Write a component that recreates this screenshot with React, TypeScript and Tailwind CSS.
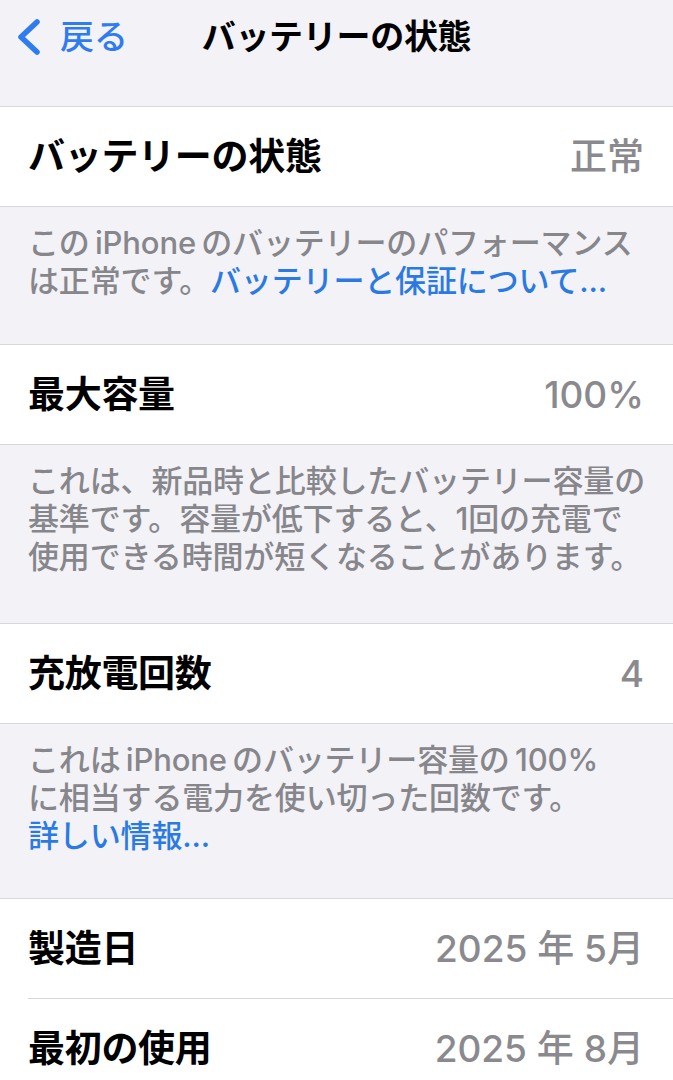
import type { ReactNode } from "react"

const font = "font-['Inter','Noto_Sans_CJK_JP',sans-serif]"

function Chevron() {
  return (
    <svg width="28" height="36" viewBox="0 0 28 36" fill="none" className="shrink-0">
      <path d="M23 3 L7 18 L23 33" stroke="#2f7bf0" strokeWidth="5.5" strokeLinecap="round" strokeLinejoin="round" />
    </svg>
  )
}

function Row({ label, value }: { label: string; value: string }) {
  return (
    <div className="flex h-[99px] items-center justify-between pl-[28px] pr-[29px]">
      <span className="text-[37px] font-semibold tracking-[-0.3px] text-black">{label}</span>
      <span className="text-[37px] font-medium text-[#8a8a8e]">{value}</span>
    </div>
  )
}

function Footer({ children, pb }: { children: ReactNode; pb: string }) {
  return (
    <div className={`px-[28px] pt-[17px] text-[31px] font-medium leading-[38px] tracking-[-0.15px] text-[#86868b] ${pb}`}>
      {children}
    </div>
  )
}

function Section({ children }: { children: ReactNode }) {
  return <div className="border-y border-[#d8d8dc] bg-white">{children}</div>
}

export default function App() {
  return (
    <div className={`min-h-screen w-full overflow-hidden bg-[#f2f2f7] ${font}`}>
      {/* nav bar */}
      <header className="grid h-[106px] grid-cols-[1fr_auto_1fr] items-start pt-[19px]">
        <div className="flex items-center gap-[18px] pl-[14px]">
          <Chevron />
          <span className="text-[34px] font-medium leading-[36px] text-[#2f7bf0]">戻る</span>
        </div>
        <h1 className="text-[34px] font-bold leading-[36px] tracking-[-0.3px] text-black">バッテリーの状態</h1>
        <div />
      </header>

      <Section>
        <Row label="バッテリーの状態" value="正常" />
      </Section>
      <Footer pb="pb-[44px]">
        <div className="whitespace-nowrap">この{"\u2009"}iPhone{"\u2009"}のバッテリーのパフォーマンス</div>
        <div className="whitespace-nowrap">
          は正常です。<span className="text-[#2a7ae2]">バッテリーと保証について...</span>
        </div>
      </Footer>

      <Section>
        <Row label="最大容量" value="100%" />
      </Section>
      <Footer pb="pb-[47px]">
        <div className="whitespace-nowrap">これは、新品時と比較したバッテリー容量の</div>
        <div className="whitespace-nowrap">基準です。容量が低下すると、1回の充電で</div>
        <div className="whitespace-nowrap">使用できる時間が短くなることがあります。</div>
      </Footer>

      <Section>
        <Row label="充放電回数" value="4" />
      </Section>
      <Footer pb="pb-[43px]">
        <div className="whitespace-nowrap">これは{"\u2009"}iPhone{"\u2009"}のバッテリー容量の{"\u2009"}100%</div>
        <div className="whitespace-nowrap">に相当する電力を使い切った回数です。</div>
        <div className="whitespace-nowrap text-[#2a7ae2]">詳しい情報...</div>
      </Footer>

      <div className="border-t border-[#d8d8dc] bg-white">
        <Row label="製造日" value="2025 年 5月" />
        <div className="ml-[28px] h-px bg-[#d8d8dc]" />
        <Row label="最初の使用" value="2025 年 8月" />
      </div>
    </div>
  )
}
